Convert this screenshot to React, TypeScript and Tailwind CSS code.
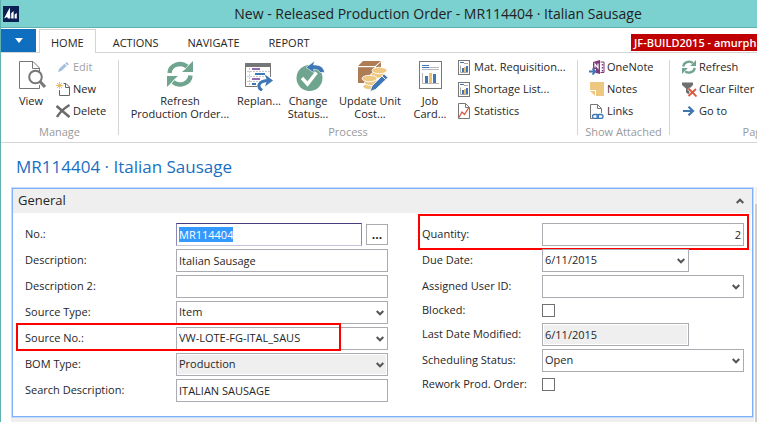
import { ReactNode, useEffect, useRef } from "react";

const GREEN = "#6fa48f";
const BLUE = "#3f76b5";
const GRAY = "#777777";

function LogoIcon() {
  return (
    <svg width="16" height="16" viewBox="0 0 16 16" aria-hidden="true">
      <rect width="16" height="16" fill="#0b2154" />
      <path d="M1 12.5 6.8 1.5 7.3 12.5H5L4 11Z" fill="#fff" />
      <path d="M8.2 12.5V7.2L10.6 5v7.5Z" fill="#fff" />
      <path d="M11.6 12.5V8.5L13.8 7v5.5Z" fill="#fff" />
    </svg>
  );
}

function ViewIcon() {
  return (
    <svg width="32" height="30" viewBox="-4 0 32 30" fill="none" stroke={GRAY} aria-hidden="true">
      <path d="M9 27.5H.5V.5H14L20.500 7V11" />
      <path d="M20.500 24V27.500H8" />
      <path d="M13.500 .5V7.500H20.500" />
      <circle cx="16.500" cy="16" r="6.300" strokeWidth="2" fill="#fff" />
      <path d="M21 20.500 26 26" strokeWidth="3" />
    </svg>
  );
}

function EditIcon() {
  return (
    <svg width="14" height="14" viewBox="0 0 14 14" aria-hidden="true">
      <path d="M2 12 3.2 8.7 8.6 3.8 10.6 6 5.2 11Z" fill="#a3bddd" />
      <path d="M9.300 3.200 10.800 2 12.800 4.200 11.400 5.400Z" fill="#a3bddd" />
    </svg>
  );
}

function NewIcon() {
  return (
    <svg width="14" height="14" viewBox="0 0 14 14" fill="none" aria-hidden="true">
      <path d="M7.500 1.500H10L13.500 5V13.500H3.500V8" stroke="#666" />
      <path d="M9.500 1.500V5.500H13.500" stroke="#666" />
      <path d="M3.500 0V7M0 3.500H7M1 1 6 6M6 1 1 6" stroke="#e8bd6c" />
    </svg>
  );
}

function DeleteIcon() {
  return (
    <svg width="14" height="14" viewBox="0 0 14 14" fill="none" stroke="#6a6a6a" aria-hidden="true">
      <path d="M.5 2 13.500 13" strokeWidth="2.600" />
      <path d="M13.500 1C8 4.500 4 8 1 13" strokeWidth="2.400" />
    </svg>
  );
}

function RefreshIcon({ size }: { size: number }) {
  return (
    <svg width={size} height={size} viewBox="0 0 26 26" fill="none" aria-hidden="true">
      <path d="M2.500 12A10.500 9.500 0 0 1 20 5.500" stroke={GREEN} strokeWidth="4.400" />
      <path d="M26 0V11H15L18.500 8 22 4Z" fill={GREEN} />
      <path d="M23.500 14.500A10.500 9.500 0 0 1 6 21" stroke={GREEN} strokeWidth="4.400" />
      <path d="M0 26V15H11L7.500 18 4 22Z" fill={GREEN} />
    </svg>
  );
}

function ReplanIcon() {
  return (
    <svg width="28" height="30" viewBox="0 -2 28 30" fill="none" aria-hidden="true">
      <path d="M12 23.500H.5V2" stroke={GRAY} />
      <path d="M25.500 2V14" stroke={GRAY} />
      <rect width="26" height="4" fill={GRAY} />
      <path d="M2 8.500H26M2 13.500H22M2 18.500H13M4.500 5V23" stroke="#c9c9c9" strokeDasharray="2 1" />
      <path d="M7 6H15" stroke="#8a57b0" strokeWidth="1.800" />
      <path d="M10 11H20M7 21H11" stroke={BLUE} strokeWidth="1.800" />
      <path d="M7 16H15" stroke="#8a57b0" strokeWidth="1.800" />
      <path d="M17 27.500C11 23 14 17.500 24 17.500" stroke={BLUE} strokeWidth="3" />
      <path d="M20 11.500 28 17.500 20 23.500 22 17.500Z" fill={BLUE} />
    </svg>
  );
}

function StatusIcon() {
  return (
    <svg width="33" height="31" viewBox="-4 1 33 31" fill="none" aria-hidden="true">
      <circle cx="13.500" cy="18" r="13" fill={GREEN} />
      <path d="M6 18 11.500 24 20.500 12.500" stroke="#fff" strokeWidth="3.400" />
      <path d="M10 7.500 18.500 1 17.500 5C24 4.500 28 7.500 28.500 12.500H24C23 10 20.500 9 17.500 9.500L18.500 13Z" fill={BLUE} stroke="#fff" strokeWidth=".6" />
    </svg>
  );
}

function CostIcon() {
  return (
    <svg width="36" height="31" viewBox="-6 0 36 31" aria-hidden="true">
      <path d="M0 5 5 0H23L17 5Z" fill="#ae7c55" />
      <path d="M0 6.200H16.500V22H0Z" fill="#ae7c55" />
      <path d="M18 5.500 23 1V12L18 17Z" fill="#ae7c55" />
      <g fill="#eec781" stroke="#fff" strokeWidth=".9">
        <ellipse cx="20" cy="14" rx="7.500" ry="3.200" />
        <ellipse cx="21.500" cy="9.500" rx="7.500" ry="3.200" />
        <ellipse cx="12.500" cy="25.500" rx="7.500" ry="3.200" />
        <ellipse cx="14" cy="21.500" rx="7.500" ry="3.200" />
        <ellipse cx="11.500" cy="17.500" rx="7.500" ry="3.200" />
      </g>
      <path d="M12 30.500 14 25 26 13 30 16.500 17.500 28.500Z" fill={BLUE} stroke="#fff" strokeWidth=".8" />
      <path d="M24 15 27.500 18.500" stroke="#fff" />
    </svg>
  );
}

function JobCardIcon() {
  return (
    <svg width="23" height="28" viewBox="0 0 23 28" aria-hidden="true">
      <rect x=".5" y=".5" width="22" height="27" fill="#fff" stroke={GRAY} />
      <path d="M10 6.500H20M3 8.500H20" stroke="#b8b8b8" />
      <path d="M3 4.500H10M3 6.500H10" stroke={BLUE} />
      <rect x="6" y="15" width="3" height="7" fill={BLUE} />
      <rect x="10" y="12" width="3" height="10" fill="#edc071" />
      <rect x="14" y="13" width="3" height="9" fill={BLUE} />
      <path d="M3.500 12V22.500H20" stroke="#b8b8b8" fill="none" />
    </svg>
  );
}

function ReportIcon() {
  return (
    <svg width="13" height="15" viewBox="0 0 13 15" aria-hidden="true">
      <rect x=".5" y=".5" width="11" height="14" fill="#fff" stroke={GRAY} />
      <path d="M2 2.500H6" stroke={BLUE} />
      <path d="M6 3.500H10M2.500 5.500V12.500H10" stroke="#aaa" fill="none" />
      <rect x="4" y="8" width="2" height="4" fill={BLUE} />
      <rect x="6" y="7" width="2" height="5" fill="#edc071" />
      <rect x="8" y="6" width="2" height="6" fill={BLUE} />
    </svg>
  );
}

function StatisticsIcon() {
  return (
    <svg width="13" height="16" viewBox="0 0 13 16" fill="none" aria-hidden="true">
      <path d="M.5 .5H7.500L11.500 4.500V15.500H.5Z" stroke={GRAY} />
      <path d="M7.500 .5V4.500H11.500" stroke={GRAY} />
      <path d="M1 14.500 4 9 6.500 11.500 10.500 5" stroke="#d8583c" strokeWidth="1.300" />
    </svg>
  );
}

function OneNoteIcon() {
  return (
    <svg width="16" height="15" viewBox="0 0 16 15" fill="none" aria-hidden="true">
      <path d="M4 2 11 0V14L7 13V9H4Z" fill="#80397b" />
      <path d="M6 7.500V4L9 8V3.500" stroke="#fff" strokeWidth="1.200" />
      <path d="M11.500 2H15V12.500H11.500" stroke="#80397b" />
      <path d="M13.500 4V5.500M13.500 7V8.500M13.500 10V11.500" stroke="#80397b" strokeWidth="1.500" />
      <path d="M0 11.500H6M3.500 8.500 6.500 11.500 3.500 14.500" stroke={BLUE} strokeWidth="1.800" />
    </svg>
  );
}

function NotesIcon() {
  return (
    <svg width="14" height="14" viewBox="0 0 14 14" aria-hidden="true">
      <path d="M0 0H14V14H6V8H0Z" fill="#eec781" />
      <path d="M0 9H5V14Z" fill="#eec781" />
    </svg>
  );
}

function LinksIcon() {
  return (
    <svg width="14" height="15" viewBox="0 0 14 15" fill="none" aria-hidden="true">
      <path d="M3 14.500H.5V.5H7.500L11.500 4.500V9" stroke={GRAY} />
      <path d="M7.500 .5V4.500H11.500" stroke={GRAY} />
      <rect x="2.500" y="10.500" width="6" height="4" rx="2" stroke={BLUE} strokeWidth="1.300" />
      <rect x="7" y="10.500" width="6" height="4" rx="2" stroke={BLUE} strokeWidth="1.300" />
    </svg>
  );
}

function ClearFilterIcon() {
  return (
    <svg width="15" height="15" viewBox="0 0 15 15" fill="none" aria-hidden="true">
      <path d="M0 .5H11V3L7.500 6.500V13L4 10.500V6.500L0 3Z" fill="#6f6f6f" />
      <path d="M6.500 6.500 14 14M14 7 6.500 14" stroke="#fff" strokeWidth="3" />
      <path d="M6.500 6.500 14.500 14.500M14 7 6.500 14" stroke="#d8583c" strokeWidth="1.800" />
    </svg>
  );
}

function GoToIcon() {
  return (
    <svg width="12" height="10" viewBox="0 0 12 10" fill="none" aria-hidden="true">
      <path d="M0 5H10M5.500 .7 10 5 5.500 9.300" stroke={BLUE} strokeWidth="2.200" />
    </svg>
  );
}

function Chevron({ up = false }: { up?: boolean }) {
  return (
    <svg width="8" height="6" viewBox="0 0 8 6" fill="none" aria-hidden="true">
      <path d={up ? "M.7 5 4 1.700 7.300 5" : "M.7 1 4 4.300 7.300 1"} stroke="#555" strokeWidth="2" />
    </svg>
  );
}

function LargeButton({ icon, label, className }: { icon: ReactNode; label: string; className: string }) {
  return (
    <button type="button" className={`mt-[7px] flex shrink-0 flex-col items-center gap-0.5 ${className}`}>
      <span className="flex h-8 justify-center pt-px">{icon}</span>
      <span className="leading-[13px] whitespace-pre-line">{label}</span>
    </button>
  );
}

function SmallButton({ icon, label, disabled }: { icon: ReactNode; label: string; disabled?: boolean }) {
  return (
    <button type="button" disabled={disabled} className="flex h-[22px] items-center gap-0.5 whitespace-nowrap disabled:text-[#a0a0a0]">
      <span className="flex w-4 shrink-0 justify-center">{icon}</span>
      <span>{label}</span>
    </button>
  );
}

function Group({ title, className, children }: { title: string; className: string; children: ReactNode }) {
  return (
    <section className={`flex shrink-0 flex-col ${className}`}>
      <div className="flex h-[72px] items-start">{children}</div>
      <h2 className="text-center leading-[14px] text-[#999]">{title}</h2>
    </section>
  );
}

function Divider() {
  return <div className="mt-[7px] h-[75px] w-px shrink-0 bg-[#d5d5d5]" />;
}

const tabs = ["HOME", "ACTIONS", "NAVIGATE", "REPORT"];

const boxClass = "h-[23px] w-full min-w-0 rounded-none border border-[#ababb2] px-0.5 outline-none";
const readOnlyClass = "bg-[#efefef] shadow-[inset_0_0_0_1px_#fff]";

function Field({ id, label, labelClass, short, marked, children }: {
  id: string;
  label: string;
  labelClass: string;
  short?: boolean;
  marked?: ReactNode;
  children: ReactNode;
}) {
  return (
    <div className="relative flex h-[23px] items-center">
      <label htmlFor={id} className={`shrink-0 whitespace-nowrap ${labelClass}`}>{label}</label>
      <div className={`relative flex min-w-0 flex-1 ${short ? "mr-[55px]" : ""}`}>{children}</div>
      {marked}
    </div>
  );
}

function DropDown({ id, value, disabled }: { id: string; value: string; disabled?: boolean }) {
  return (
    <>
      <select id={id} disabled={disabled} defaultValue={value} className={`appearance-none disabled:opacity-100 ${boxClass} ${disabled ? readOnlyClass : "bg-white"}`}>
        <option value={value}>{value}</option>
      </select>
      <span className="pointer-events-none absolute top-[9px] right-1"><Chevron /></span>
    </>
  );
}

function CheckField({ id, label }: { id: string; label: string }) {
  return (
    <div className="flex h-[19px] items-center">
      <label htmlFor={id} className="w-[120px] shrink-0 whitespace-nowrap">{label}</label>
      <input id={id} type="checkbox" className="size-[13px] appearance-none border border-[#707070] bg-white checked:bg-[#106ebe]" />
    </div>
  );
}

export default function App() {
  const noRef = useRef<HTMLInputElement>(null);

  // the number field opens focused with its content selected
  useEffect(() => {
    noRef.current?.focus();
    noRef.current?.select();
  }, []);

  const left = "w-[151px]";
  const right = "w-[120px]";

  return (
    <div className="flex min-h-screen flex-col overflow-hidden border-l border-[#62b1b1] bg-white font-['Open_Sans','Noto_Sans',sans-serif] text-[11px] text-[#262626]">
      <header className="flex h-7 shrink-0 items-center border-b border-[#62b1b1] bg-[#7bd0d0] pl-0.5">
        <LogoIcon />
        <h1 className="flex-1 pl-[100px] text-center text-[14px] whitespace-nowrap text-[#222]">
          New - Released Production Order - MR114404 · Italian Sausage
        </h1>
      </header>

      <nav className="mt-px flex h-6 shrink-0 border-b border-[#d5d5d5]">
        <button type="button" aria-label="File menu" className="mr-[3px] flex h-[23px] w-[35px] shrink-0 items-center justify-center bg-[#106ebe]">
          <svg width="8" height="5" viewBox="0 0 8 5" aria-hidden="true"><path d="M0 0H8L4 5Z" fill="#fff" /></svg>
        </button>
        <div className="flex gap-[5px]">
          {tabs.map((tab) => (
            <a
              key={tab}
              href="#"
              className={tab === "HOME" ? "-mb-px border border-b-0 border-[#d5d5d5] bg-white px-[11px] leading-[26px]" : "px-3 leading-7"}
            >
              {tab}
            </a>
          ))}
        </div>
        <div className="ml-auto flex w-[126px] shrink-0 items-center pt-1">
          <span className="h-[17px] w-full bg-[#c00000] pl-[3px] leading-[17px] font-semibold whitespace-nowrap text-white">
            JF-BUILD2015 - amurph
          </span>
        </div>
      </nav>

      <div className="flex h-[90px] shrink-0 overflow-hidden border-b border-[#d5d5d5]">
        <Group title="Manage" className="w-[117px]">
          <LargeButton icon={<ViewIcon />} label="View" className="ml-1.5 w-[48px]" />
          <div className="mt-[3px]">
            <SmallButton icon={<EditIcon />} label="Edit" disabled />
            <SmallButton icon={<NewIcon />} label="New" />
            <SmallButton icon={<DeleteIcon />} label="Delete" />
          </div>
        </Group>
        <Divider />
        <Group title="Process" className="w-[458px]">
          <LargeButton icon={<RefreshIcon size={26} />} label={"Refresh\nProduction Order..."} className="ml-1.5 w-[110px]" />
          <LargeButton icon={<ReplanIcon />} label="Replan..." className="w-[48px]" />
          <LargeButton icon={<StatusIcon />} label={"Change\nStatus..."} className="w-[50px]" />
          <LargeButton icon={<CostIcon />} label={"Update Unit\nCost..."} className="w-[74px]" />
          <LargeButton icon={<JobCardIcon />} label={"Job\nCard..."} className="w-[46px]" />
          <div className="mt-[3px] ml-[3px]">
            <SmallButton icon={<ReportIcon />} label="Mat. Requisition..." />
            <SmallButton icon={<ReportIcon />} label="Shortage List..." />
            <SmallButton icon={<StatisticsIcon />} label="Statistics" />
          </div>
        </Group>
        <Divider />
        <Group title="Show Attached" className="w-[91px]">
          <div className="mt-[3px] ml-[11px]">
            <SmallButton icon={<OneNoteIcon />} label="OneNote" />
            <SmallButton icon={<NotesIcon />} label="Notes" />
            <SmallButton icon={<LinksIcon />} label="Links" />
          </div>
        </Group>
        <Divider />
        <Group title="Page" className="w-[170px]">
          <div className="mt-[3px] ml-[11px]">
            <SmallButton icon={<RefreshIcon size={14} />} label="Refresh" />
            <SmallButton icon={<ClearFilterIcon />} label="Clear Filter" />
            <SmallButton icon={<GoToIcon />} label="Go to" />
          </div>
        </Group>
      </div>

      <h2 className="flex h-11 shrink-0 items-center px-[15px] pt-1 text-[17px] text-[#1a6fc4]">MR114404 · Italian Sausage</h2>

      <div className="flex flex-1 pl-2.5">
        <main className="flex min-w-0 flex-1 flex-col bg-white">
          <section className="m-px border border-[#7fb1fb] ring-1 ring-[#c5dcff]">
            <button type="button" className="flex h-6 w-full items-center justify-between bg-[#efefef] pr-2 pl-[5px] text-[13px]">
              <span>General</span>
              <Chevron up />
            </button>
            <form className="grid grid-cols-[363fr_322fr] gap-x-[34px] pt-2.5 pr-2 pb-[14px] pl-3">
              <div className="flex flex-col gap-[3px]">
                <Field id="no" label="No.:" labelClass={left}>
                  <input
                    id="no"
                    ref={noRef}
                    defaultValue="MR114404"
                    className="h-[23px] min-w-0 flex-1 border border-t-[#433c7d] border-r-[#8d89b5] border-b-[#c5c4dc] border-l-[#8d89b5] px-0.5 outline-none selection:bg-[#3399ff] selection:text-white"
                  />
                  <button type="button" aria-label="Assist edit" className="mt-px ml-1 h-[21px] w-[22px] border border-[#ababb2] text-xs leading-[19px] font-bold">...</button>
                </Field>
                <Field id="description" label="Description:" labelClass={left}>
                  <input id="description" defaultValue="Italian Sausage" className={boxClass} />
                </Field>
                <Field id="description2" label="Description 2:" labelClass={left}>
                  <input id="description2" className={boxClass} />
                </Field>
                <Field id="source-type" label="Source Type:" labelClass={left}>
                  <DropDown id="source-type" value="Item" />
                </Field>
                <Field
                  id="source-no"
                  label="Source No.:"
                  labelClass={left}
                  marked={<div className="pointer-events-none absolute -top-1 -bottom-px right-[47px] -left-[9px] border-2 border-[#f00]" />}
                >
                  <DropDown id="source-no" value="VW-LOTE-FG-ITAL_SAUS" />
                </Field>
                <Field id="bom-type" label="BOM Type:" labelClass={left}>
                  <DropDown id="bom-type" value="Production" disabled />
                </Field>
                <Field id="search-description" label="Search Description:" labelClass={left}>
                  <input id="search-description" defaultValue="ITALIAN SAUSAGE" className={boxClass} />
                </Field>
              </div>

              <div className="flex flex-col gap-[3px]">
                <Field
                  id="quantity"
                  label="Quantity:"
                  labelClass={right}
                  marked={<div className="pointer-events-none absolute -top-[9px] -right-[5px] -bottom-1 -left-1 border-2 border-[#f00]" />}
                >
                  <input id="quantity" defaultValue="2" className={`text-right ${boxClass}`} />
                </Field>
                <Field id="due-date" label="Due Date:" labelClass={right} short>
                  <DropDown id="due-date" value="6/11/2015" />
                </Field>
                <Field id="user-id" label="Assigned User ID:" labelClass={right}>
                  <DropDown id="user-id" value="" />
                </Field>
                <CheckField id="blocked" label="Blocked:" />
                <Field id="last-modified" label="Last Date Modified:" labelClass={right} short>
                  <input id="last-modified" readOnly defaultValue="6/11/2015" className={`${boxClass} ${readOnlyClass}`} />
                </Field>
                <Field id="scheduling" label="Scheduling Status:" labelClass={right}>
                  <DropDown id="scheduling" value="Open" />
                </Field>
                <CheckField id="rework" label="Rework Prod. Order:" />
              </div>
            </form>
          </section>
          <div className="flex-1 bg-[#efefef]" />
        </main>
        <div className="ml-px flex w-0.5 shrink-0 flex-col bg-[#f0f0f0] pt-[17px]">
          <div className="flex-1 bg-[#cdcdcd]" />
        </div>
      </div>
    </div>
  );
}
